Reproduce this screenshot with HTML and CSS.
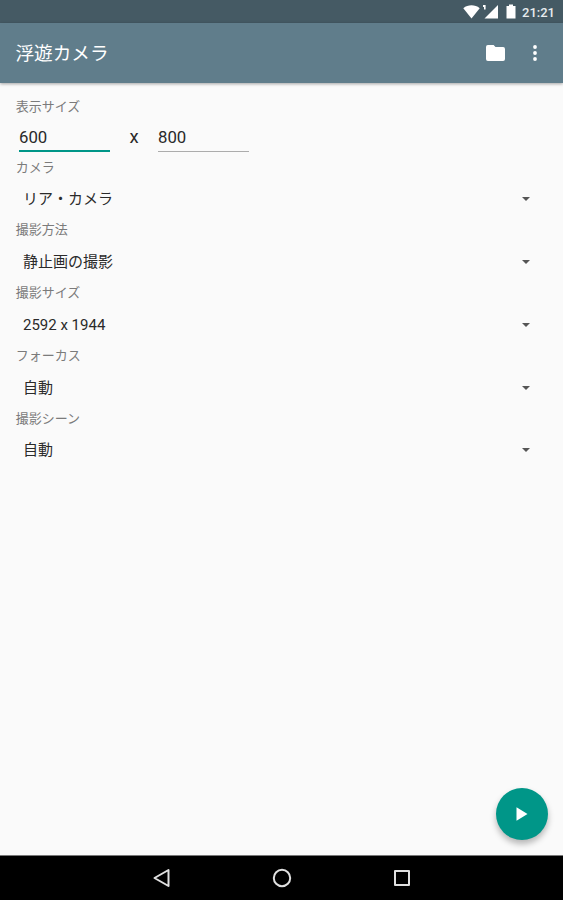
FILE: index.html
```html
<!DOCTYPE html>
<html lang="ja">
<head>
    <meta charset="UTF-8">
    <meta name="viewport" content="width=device-width, initial-scale=1.0">
    <title>浮遊カメラ</title>
    <link rel="stylesheet" href="styles.css">
</head>
<body>
    <div class="status-bar">
        <svg class="wifi" width="17" height="14" viewBox="0 0 17 14"><path d="M0.3 3.2C5 -0.6 12 -0.6 16.7 3.2L8.5 13.5z"/></svg>
        <svg class="signal" width="17" height="15" viewBox="0 0 17 15"><path d="M16 1v13.5H2.5z"/><path d="M1 1h2.6v4.5H2V3H1z"/></svg>
        <svg class="battery" width="10" height="15" viewBox="0 0 10 15"><path d="M3 0.5h4v1.5h2.5v12.5h-9V2H3z"/></svg>
        <span class="clock">21:21</span>
    </div>

    <header class="app-bar">
        <h1>浮遊カメラ</h1>
        <svg class="folder" width="19" height="16" viewBox="0 0 20 16" preserveAspectRatio="none"><path d="M2 0h6l2 2h8a2 2 0 0 1 2 2v10a2 2 0 0 1-2 2H2a2 2 0 0 1-2-2V2a2 2 0 0 1 2-2z"/></svg>
        <svg class="more" width="4" height="16" viewBox="0 0 4 16"><circle cx="2" cy="2" r="1.9"/><circle cx="2" cy="8" r="1.9"/><circle cx="2" cy="14" r="1.9"/></svg>
    </header>

    <main>
        <div class="label">表示サイズ</div>
        <div class="size-row">
            <input type="text" class="size-input active" value="600">
            <span class="times">x</span>
            <input type="text" class="size-input" value="800">
        </div>

        <div class="label">カメラ</div>
        <div class="spinner">リア・カメラ<span class="arrow"></span></div>

        <div class="label">撮影方法</div>
        <div class="spinner">静止画の撮影<span class="arrow"></span></div>

        <div class="label">撮影サイズ</div>
        <div class="spinner">2592 x 1944<span class="arrow"></span></div>

        <div class="label">フォーカス</div>
        <div class="spinner">自動<span class="arrow"></span></div>

        <div class="label">撮影シーン</div>
        <div class="spinner">自動<span class="arrow"></span></div>
    </main>

    <button class="fab" aria-label="開始">
        <svg width="12" height="14" viewBox="0 0 12 14"><path d="M0.5 0.3L11.5 7L0.5 13.7z"/></svg>
    </button>

    <nav class="nav-bar">
        <svg width="20" height="20" viewBox="0 0 20 20"><path d="M16.5 2v16L2.5 10z"/></svg>
        <svg width="20" height="20" viewBox="0 0 20 20"><circle cx="10" cy="10" r="8.2"/></svg>
        <svg width="20" height="20" viewBox="0 0 20 20"><rect x="3" y="3" width="14" height="14"/></svg>
    </nav>
</body>
</html>
```

FILE: styles.css
```css
* {
    box-sizing: border-box;
}

body {
    margin: 0;
    height: 100vh;
    display: flex;
    flex-direction: column;
    overflow: hidden;
    background-color: #fafafa;
    color: #2a2a2a;
    font-family: Roboto, "Noto Sans CJK JP", sans-serif;
}

svg {
    display: block;
    flex: none;
    fill: #fff;
}

/* Status bar */
.status-bar {
    flex: none;
    height: 23px;
    padding-right: 8px;
    display: flex;
    justify-content: flex-end;
    align-items: center;
    background-color: #455a64;
    color: #e8ecee;
}

.signal {
    margin-left: 2px;
}

.battery {
    margin-left: 7px;
}

.clock {
    width: 33px;
    margin-left: 6px;
    font-size: 13px;
    font-weight: 500;
    line-height: 23px;
    padding-top: 1px;
}

/* App bar */
.app-bar {
    flex: none;
    height: 60px;
    padding: 0 26px 0 15.5px;
    display: flex;
    align-items: center;
    background-color: #607d8b;
    color: #fff;
    box-shadow: 0 1px 3px rgba(0, 0, 0, 0.35);
}

h1 {
    flex: 1;
    margin: 0;
    padding-top: 2px;
    font-size: 18.6px;
    font-weight: 400;
    line-height: 28px;
}

.more {
    margin-left: 28px;
}

/* Settings */
main {
    flex: 1;
    padding: 15px 15px 0;
}

.label {
    height: 18.75px;
    padding-left: 0.7px;
    font-size: 13px;
    line-height: 18.75px;
    color: #7b7b7b;
}

.size-row {
    height: 41.75px;
    padding: 7px 0 6px 4px;
    display: flex;
}

.size-input {
    width: 91px;
    height: 28px;
    padding: 0 0 1px;
    border: none;
    border-bottom: 1px solid #acacac;
    outline: none;
    background: none;
    color: #2a2a2a;
    font-family: inherit;
    font-size: 16.8px;
}

.size-input.active {
    padding-bottom: 0;
    border-bottom: 2px solid #009688;
}

.times {
    width: 48px;
    text-align: center;
    font-size: 18.5px;
    line-height: 27px;
}

.spinner {
    height: 44px;
    padding: 0 18.5px 0 8px;
    display: flex;
    justify-content: space-between;
    align-items: center;
    font-size: 15px;
    line-height: 20px;
}

.arrow {
    border: 4.5px solid transparent;
    border-top-color: #555;
    border-bottom: none;
}

/* Floating start button */
.fab {
    position: absolute;
    right: 15px;
    bottom: 60px;
    width: 52px;
    height: 52px;
    padding: 0;
    display: flex;
    justify-content: center;
    align-items: center;
    border: none;
    border-radius: 50%;
    background-color: #009688;
    box-shadow: 0 4px 6px rgba(0, 0, 0, 0.28);
}

/* Navigation bar */
.nav-bar {
    flex: none;
    height: 45px;
    display: flex;
    justify-content: center;
    align-items: center;
    gap: 100px;
    border-top: 1px solid #777;
    background-color: #000;
}

.nav-bar svg {
    fill: none;
    stroke: #e0e0e0;
    stroke-width: 2;
    stroke-linejoin: round;
}
```
